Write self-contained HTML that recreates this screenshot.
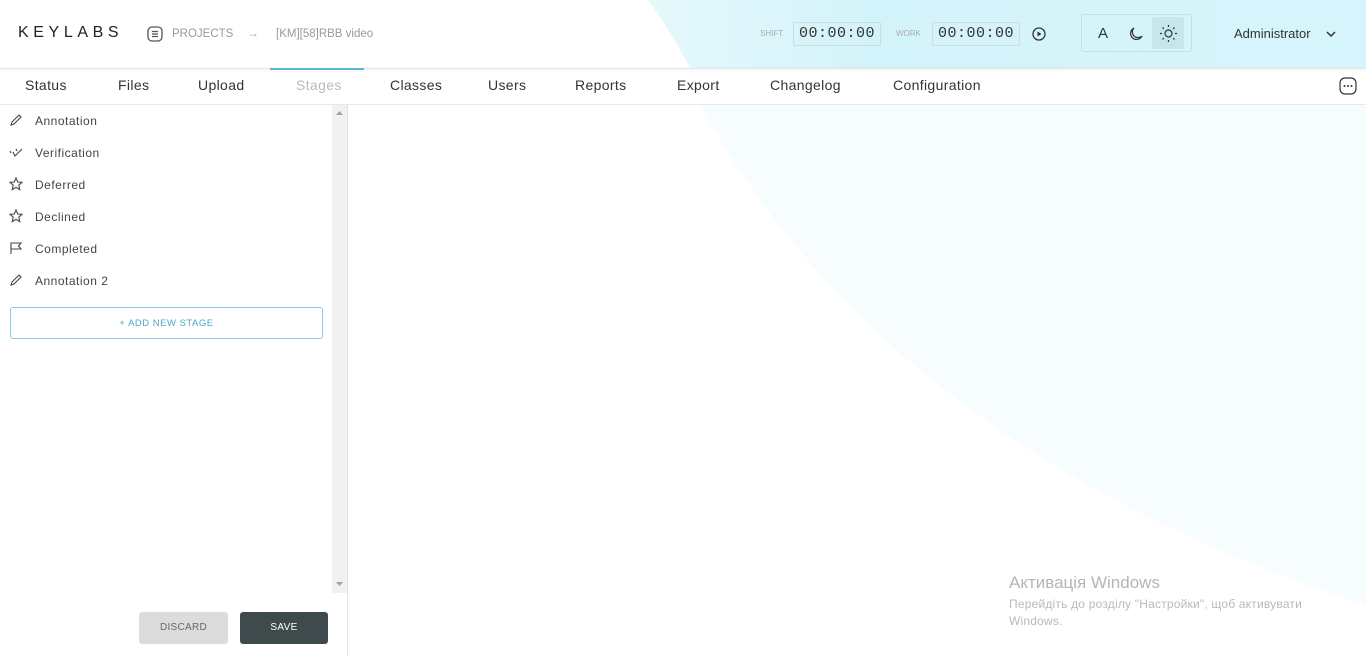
<!DOCTYPE html>
<html><head><meta charset="utf-8"><style>
*{margin:0;padding:0;box-sizing:border-box}
body{width:1366px;height:656px;overflow:hidden;background:#fff;font-family:"Liberation Sans",sans-serif;position:relative;color:#333}
.abs{position:absolute}
.nav span{position:absolute;top:77px;font-size:14px;color:#333;letter-spacing:.35px}
.st{position:absolute;left:35px;font-size:12px;color:#444;letter-spacing:.5px}
.ic{position:absolute;left:9px}
.tm{position:absolute;top:22px;height:24px;border:1px solid #c9dde2;border-radius:2px;font-family:"Liberation Mono",monospace;font-size:15px;color:#333;text-align:center;line-height:22px;width:88px;letter-spacing:0.5px}
</style></head><body>
<svg class="abs" style="left:0;top:0" width="1366" height="656">
<defs><linearGradient id="g" x1="0" x2="1"><stop offset="0" stop-color="#e6f8fc"/><stop offset="0.3" stop-color="#d3f3fa"/><stop offset="1" stop-color="#d6f4fb"/></linearGradient></defs>
<path d="M700 105 C780 250 950 470 1366 605 L1366 105 Z" fill="#f7fcfe"/>
<path d="M648 0 L1366 0 L1366 68 L690 68 Q670 30 648 0 Z" fill="url(#g)"/>
</svg>
<div class="abs" style="left:0;top:68px;width:1366px;height:1px;background:#e4e8ea;box-shadow:0 1px 3px rgba(0,0,0,.12)"></div>
<div class="abs" style="left:0;top:104px;width:1366px;height:1px;background:#e6e9eb"></div>
<div class="abs" style="left:18px;top:24px;font-size:16px;letter-spacing:4.6px;color:#222">KEYLABS</div>
<svg class="abs" style="left:147px;top:26px" width="16" height="16"><rect x="1" y="1" width="14" height="14" rx="4" fill="none" stroke="#555" stroke-width="1.3"/><path d="M5 5.5h6M5 8h6M5 10.5h6" stroke="#555" stroke-width="1.2"/></svg>
<div class="abs" style="left:172px;top:28px;font-size:11.5px;color:#999">PROJECTS</div>
<div class="abs" style="left:247px;top:26px;font-size:12px;color:#aaa">→</div>
<div class="abs" style="left:276px;top:28px;font-size:11.5px;color:#999">[KM][58]RBB video</div>
<div class="abs" style="left:760px;top:29px;font-size:8px;color:#aaa">SHIFT</div>
<div class="tm" style="left:793px">00:00:00</div>
<div class="abs" style="left:896px;top:29px;font-size:8px;color:#aaa">WORK</div>
<div class="tm" style="left:932px">00:00:00</div>
<svg class="abs" style="left:1031px;top:26px" width="16" height="16"><circle cx="8" cy="8" r="6" fill="none" stroke="#333" stroke-width="1.3"/><path d="M6.5 5.5L10.5 8L6.5 10.5Z" fill="#333"/></svg>
<div class="abs" style="left:1081px;top:14px;width:111px;height:38px;border:1px solid #c7dde2;border-radius:3px"></div>
<div class="abs" style="left:1152px;top:17px;width:32px;height:32px;background:#c6e5ec;border-radius:2px"></div>
<div class="abs" style="left:1098px;top:25px;font-size:15px;color:#333">A</div>
<svg class="abs" style="left:1127px;top:25px" width="18" height="18"><path d="M7 3 A6 6 0 1 0 15 11 A5 5 0 0 1 7 3Z" fill="none" stroke="#333" stroke-width="1.2"/></svg>
<svg class="abs" style="left:1159px;top:24px" width="19" height="19"><circle cx="9.5" cy="9.5" r="3.5" fill="none" stroke="#333" stroke-width="1.2"/><path d="M9.5 1v2M9.5 16v2M1 9.5h2M16 9.5h2M3.5 3.5l1.4 1.4M14.1 14.1l1.4 1.4M3.5 15.5l1.4-1.4M14.1 4.9l1.4-1.4" stroke="#333" stroke-width="1.2"/></svg>
<div class="abs" style="left:1234px;top:26px;font-size:13px;color:#333">Administrator</div>
<svg class="abs" style="left:1326px;top:30px" width="10" height="8"><path d="M1 2l4 4 4-4" fill="none" stroke="#333" stroke-width="1.5"/></svg>
<div class="nav">
<span style="left:25px">Status</span><span style="left:118px">Files</span><span style="left:198px">Upload</span><span style="left:296px;color:#bbb">Stages</span><span style="left:390px">Classes</span><span style="left:488px">Users</span><span style="left:575px">Reports</span><span style="left:677px">Export</span><span style="left:770px">Changelog</span><span style="left:893px">Configuration</span>
</div>
<div class="abs" style="left:270px;top:68px;width:94px;height:2px;background:#5ab8d2"></div>
<svg class="abs" style="left:1339px;top:77px" width="18" height="18"><rect x="1" y="1" width="16" height="16" rx="5" fill="none" stroke="#333" stroke-width="1.2"/><circle cx="5.5" cy="9" r="1" fill="#333"/><circle cx="9" cy="9" r="1" fill="#333"/><circle cx="12.5" cy="9" r="1" fill="#333"/></svg>
<div class="abs" style="left:0;top:105px;width:348px;height:551px;background:#fff;border-right:1px solid #e4e4e4"></div>
<div class="abs" style="left:332px;top:105px;width:15px;height:488px;background:#f1f1f1"></div>
<svg class="abs" style="left:335px;top:110px" width="9" height="6"><path d="M1 5L4.5 1L8 5Z" fill="#a3a3a3"/></svg>
<svg class="abs" style="left:335px;top:581px" width="9" height="6"><path d="M1 1L4.5 5L8 1Z" fill="#a3a3a3"/></svg>
<svg class="ic" style="top:113px" width="14" height="14"><path d="M2 12L3 9L10 2L12 4L5 11Z" fill="none" stroke="#444" stroke-width="1.1"/></svg>
<div class="st" style="top:114px">Annotation</div>
<svg class="ic" style="top:146px" width="16" height="12"><path d="M1 5L2 7M4 6L6 10L13 3M7 3L8 5" fill="none" stroke="#444" stroke-width="1.1"/></svg>
<div class="st" style="top:146px">Verification</div>
<svg class="ic" style="top:177px" width="14" height="14"><path d="M7 1L8.8 5L13 5.3L9.8 8.2L10.8 12.7L7 10.3L3.2 12.7L4.2 8.2L1 5.3L5.2 5Z" fill="none" stroke="#444" stroke-width="1.1"/></svg>
<div class="st" style="top:178px">Deferred</div>
<svg class="ic" style="top:209px" width="14" height="14"><path d="M7 1L8.8 5L13 5.3L9.8 8.2L10.8 12.7L7 10.3L3.2 12.7L4.2 8.2L1 5.3L5.2 5Z" fill="none" stroke="#444" stroke-width="1.1"/></svg>
<div class="st" style="top:210px">Declined</div>
<svg class="ic" style="top:241px" width="14" height="14"><path d="M2 13V2H12L9.5 5L12 8H2" fill="none" stroke="#444" stroke-width="1.1"/></svg>
<div class="st" style="top:242px">Completed</div>
<svg class="ic" style="top:273px" width="14" height="14"><path d="M2 12L3 9L10 2L12 4L5 11Z" fill="none" stroke="#444" stroke-width="1.1"/></svg>
<div class="st" style="top:274px">Annotation 2</div>
<div class="abs" style="left:10px;top:307px;width:313px;height:32px;border:1px solid #8ccbe0;border-radius:3px;text-align:center;line-height:31px;font-size:9.5px;color:#4aa7c9;letter-spacing:.5px">+ ADD NEW STAGE</div>
<div class="abs" style="left:139px;top:612px;width:89px;height:32px;background:#dcdcdc;border-radius:3px;text-align:center;line-height:32px;font-size:10px;color:#666;letter-spacing:.3px">DISCARD</div>
<div class="abs" style="left:240px;top:612px;width:88px;height:32px;background:#3f4a4c;border-radius:3px;text-align:center;line-height:32px;font-size:10px;color:#fff;letter-spacing:.3px">SAVE</div>
<div class="abs" style="left:1009px;top:573px;font-size:17px;color:#b5b5b5">Активація Windows</div>
<div class="abs" style="left:1009px;top:596px;font-size:12px;color:#b9b9b9;line-height:17px;width:330px;letter-spacing:.2px">Перейдіть до розділу "Настройки", щоб активувати Windows.</div>
</body></html>
